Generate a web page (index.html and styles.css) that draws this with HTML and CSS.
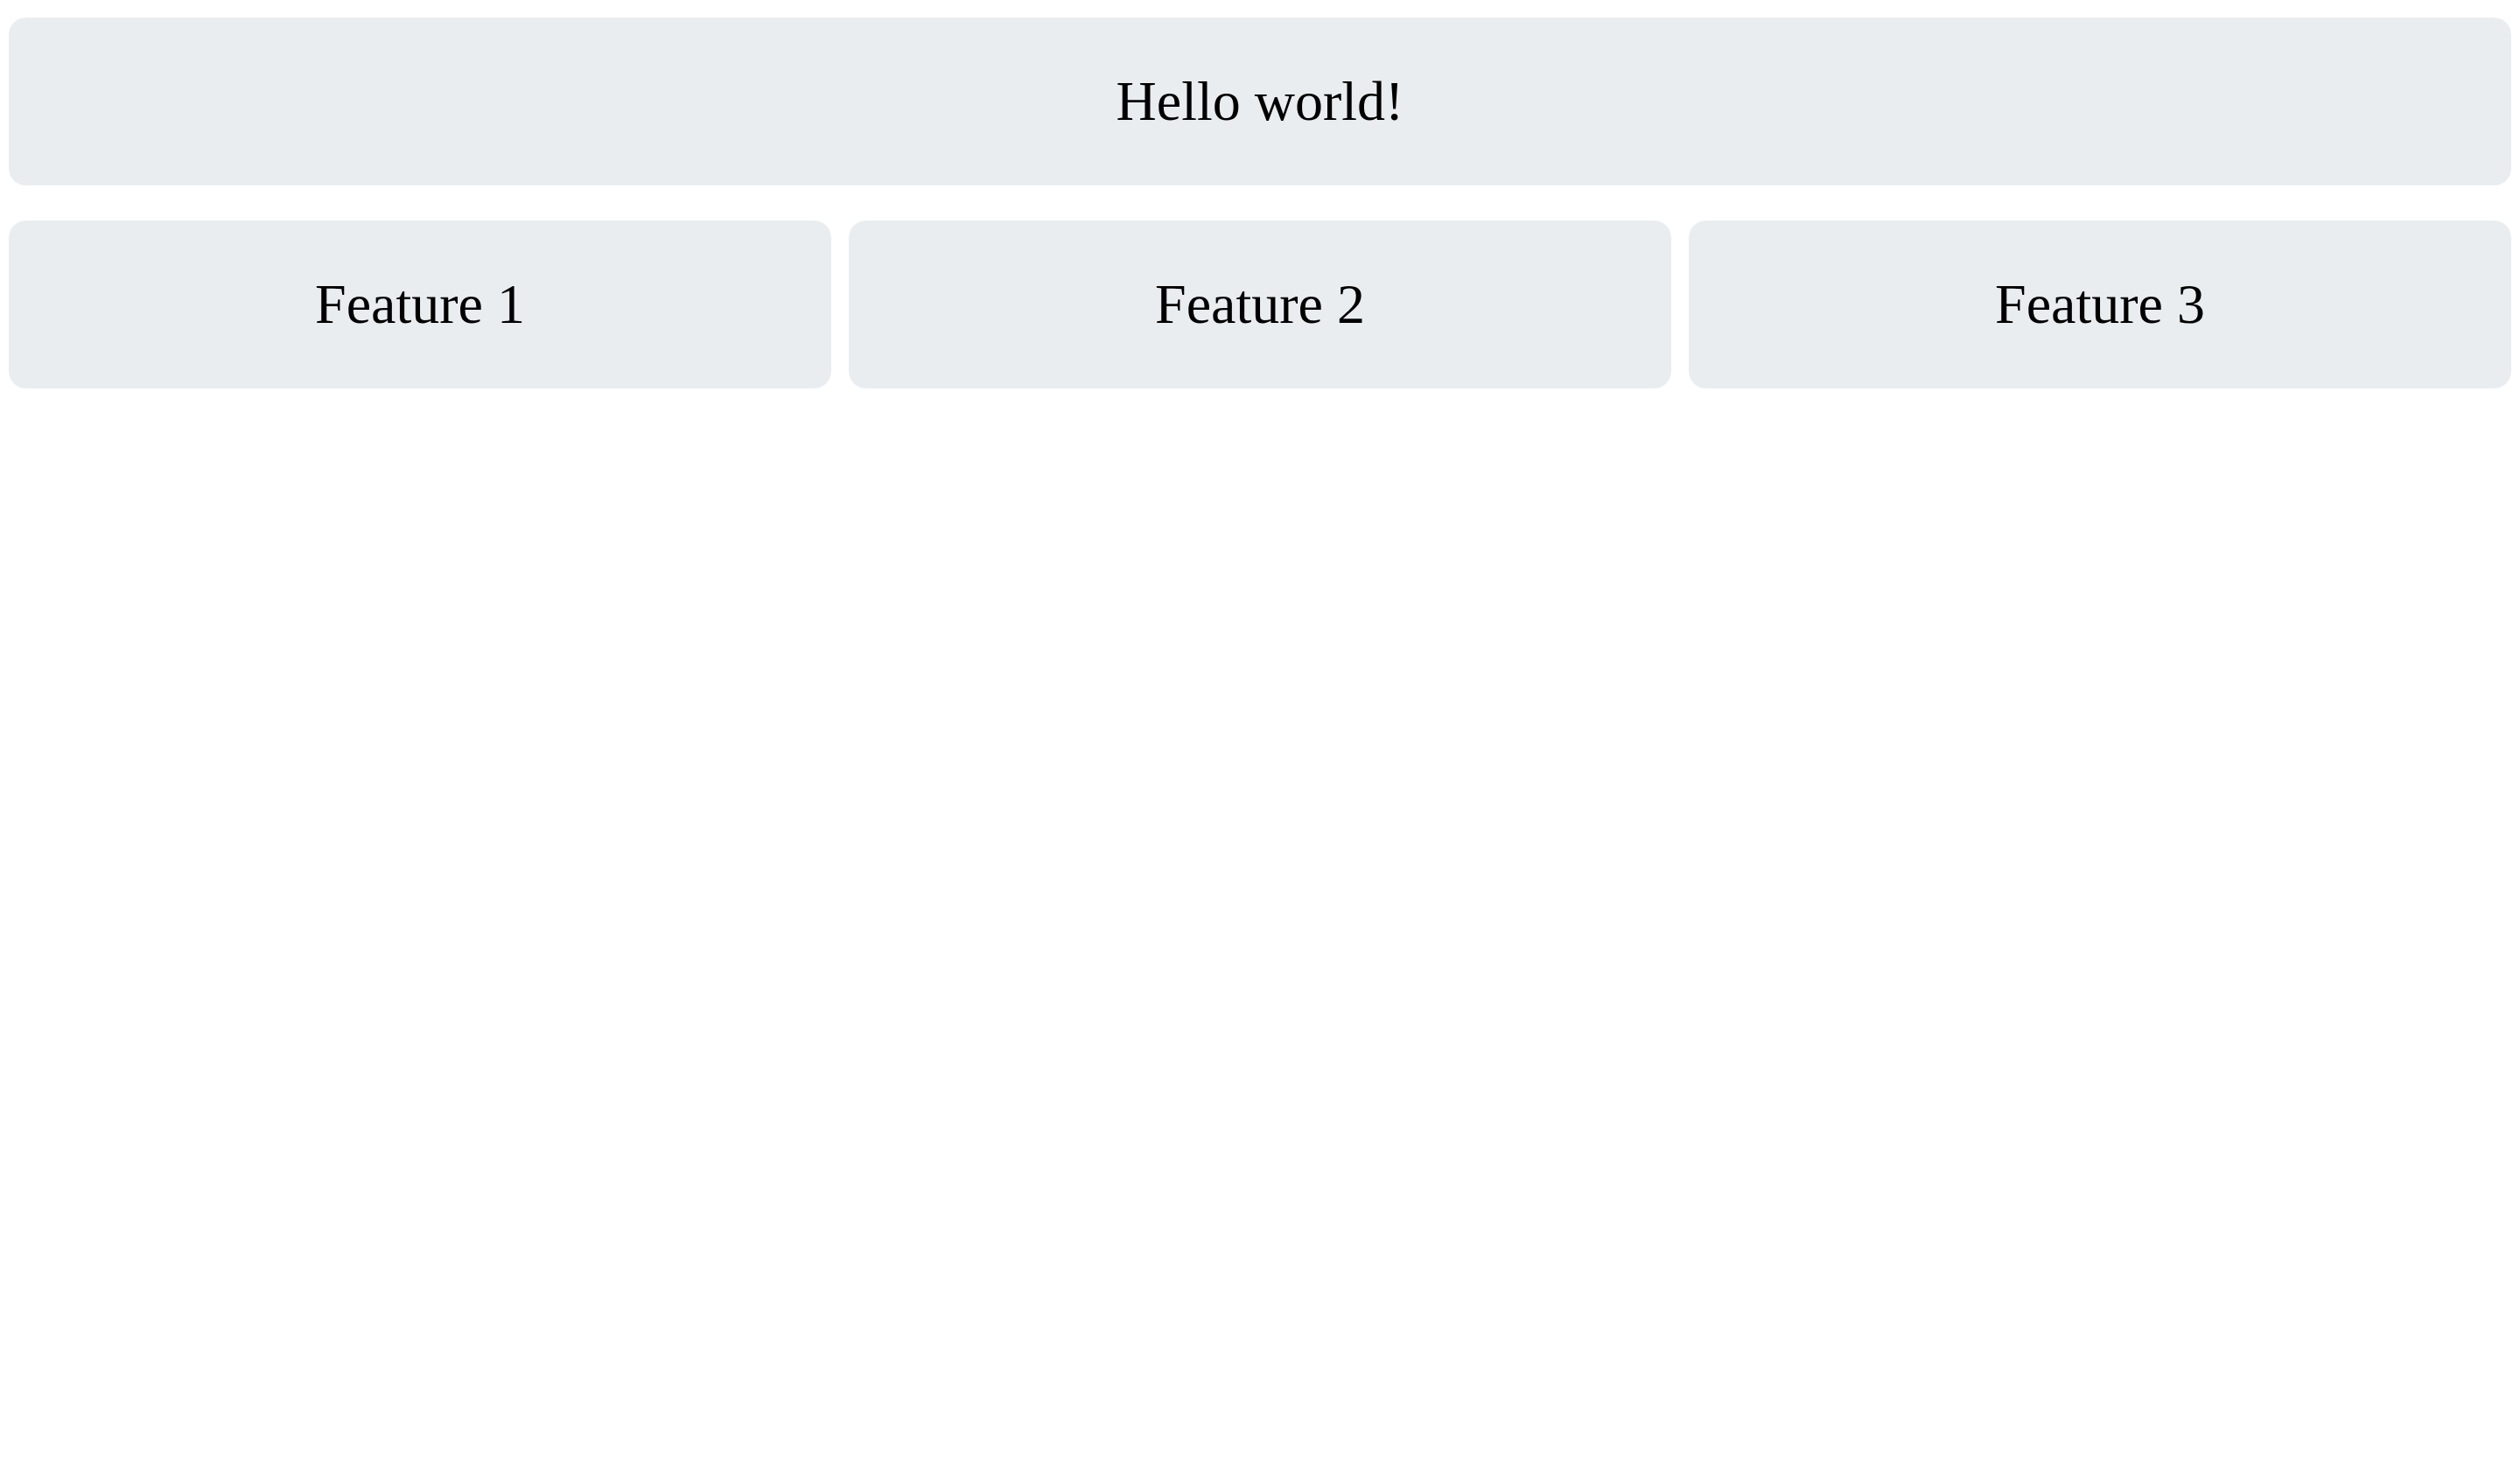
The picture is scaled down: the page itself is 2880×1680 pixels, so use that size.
FILE: index.html
```html
<!DOCTYPE html>
<html lang="en">
<head>
  <meta charset="UTF-8">
  <meta name="viewport" content="width=device-width, initial-scale=1.0">
  <title>Hello world</title>
  <link rel="stylesheet" href="styles.css">
</head>
<body>

  <div class="layout">
    <header class="box hero">Hello world!</header>

    <div class="features">
      <div class="box">Feature 1</div>
      <div class="box">Feature 2</div>
      <div class="box">Feature 3</div>
    </div>
  </div>

</body>
</html>
```

FILE: styles.css
```css
body { margin: 0; font-family: "Liberation Serif", "Times New Roman", serif; color: #000; background: #fff; }
.layout { display: flex; flex-direction: column; gap: 40px; padding: 20px 10px; }
.features { display: grid; grid-template-columns: repeat(3, 1fr); gap: 20px; }
.box { display: flex; align-items: center; justify-content: center; height: 192px; background-color: #e9edf0; border-radius: 20px; font-size: 64px; }
```
